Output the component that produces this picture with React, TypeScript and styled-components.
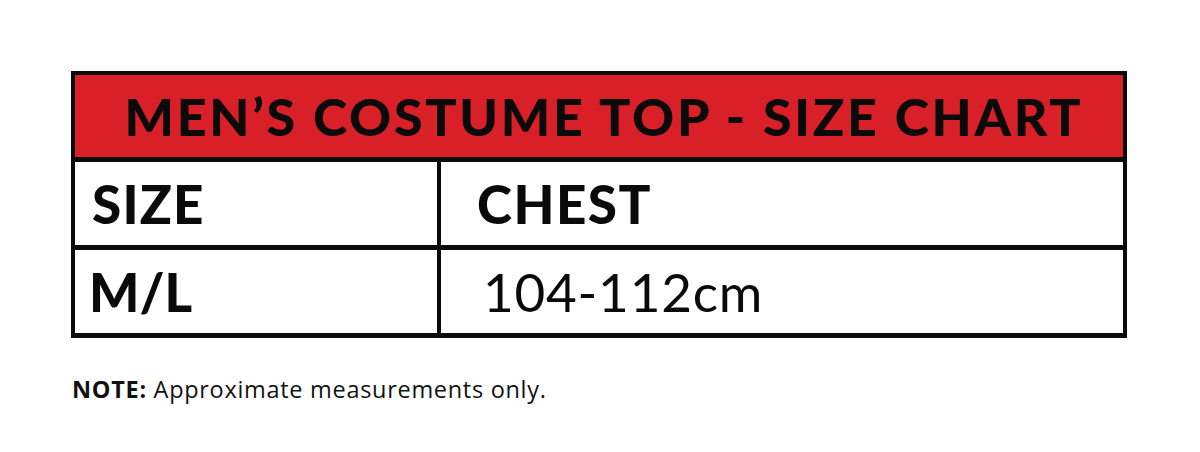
import React from 'react';
import styled, { createGlobalStyle } from 'styled-components';

const GlobalStyle = createGlobalStyle`
  html, body {
    margin: 0;
    padding: 0;
    background: #ffffff;
  }
`;

const Page = styled.div`
  width: 1200px;
  height: 452px;
  box-sizing: border-box;
  padding: 71px 73px 0 71px;
  background: #ffffff;
  font-family: 'Lato', 'Liberation Sans', sans-serif;
  color: #0a0a0a;
`;

const Chart = styled.div`
  border: 4px solid #0a0a0a;
  border-bottom-width: 5px;
  box-sizing: border-box;
  width: 1056px;
`;

const Title = styled.div`
  height: 82px;
  background: #d91f27;
  border-bottom: 5px solid #0a0a0a;
  display: flex;
  align-items: center;
  justify-content: center;
  font-weight: 900;
  font-size: 52px;
  letter-spacing: 2.7px;
  white-space: nowrap;
  padding-left: 10px;
`;

const Row = styled.div<{ $last?: boolean }>`
  display: grid;
  grid-template-columns: 362px 1fr;
  height: 83px;
  border-bottom: ${({ $last }) => ($last ? 'none' : '5px solid #0a0a0a')};
`;

const Cell = styled.div<{ $pad: number; $weight: number; $spacing: number }>`
  display: flex;
  align-items: center;
  padding-left: ${({ $pad }) => $pad}px;
  font-size: 53px;
  font-weight: ${({ $weight }) => $weight};
  letter-spacing: ${({ $spacing }) => $spacing}px;
  white-space: nowrap;
  & + & {
    border-left: 4.5px solid #0a0a0a;
  }
`;

const Note = styled.p`
  margin: 35px 0 0 1px;
  font-family: 'Open Sans', 'Liberation Sans', sans-serif;
  font-size: 23.5px;
  letter-spacing: 0.7px;
  color: #111;
  strong {
    font-weight: 700;
  }
`;

export default function App() {
  return (
    <Page>
      <GlobalStyle />
      <Chart>
        <Title>MEN’S COSTUME TOP - SIZE CHART</Title>
        <Row>
          <Cell $pad={17} $weight={900} $spacing={1.2}>SIZE</Cell>
          <Cell $pad={36} $weight={900} $spacing={1.5}>CHEST</Cell>
        </Row>
        <Row $last>
          <Cell $pad={14} $weight={900} $spacing={0}>M/L</Cell>
          <Cell $pad={42} $weight={400} $spacing={0.8}>104-112cm</Cell>
        </Row>
      </Chart>
      <Note>
        <strong>NOTE:</strong> Approximate measurements only.
      </Note>
    </Page>
  );
}
